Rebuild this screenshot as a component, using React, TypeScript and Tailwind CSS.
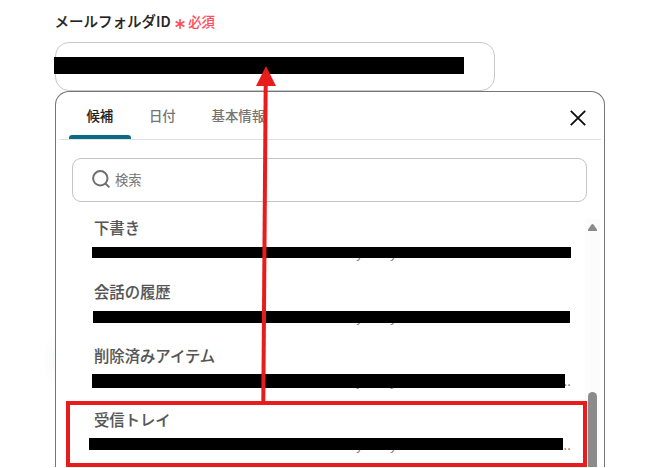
import React, { useState } from 'react'
import clsx from 'clsx'

interface Folder {
  id: string
  name: string
  // 伏せ字バーの位置とサイズ
  maskClass: string
  truncated: boolean
}

const TABS = ['候補', '日付', '基本情報']

const FOLDERS: Folder[] = [
  { id: 'drafts', name: '下書き', maskClass: 'left-[-2px] top-[32px] h-[11px] w-[479px]', truncated: false },
  { id: 'history', name: '会話の履歴', maskClass: 'left-[-1px] top-[32px] h-[12px] w-[477px]', truncated: false },
  { id: 'deleted', name: '削除済みアイテム', maskClass: 'left-[-2px] top-[31px] h-[14px] w-[473px]', truncated: true },
  { id: 'inbox', name: '受信トレイ', maskClass: 'left-[-5px] top-[31px] h-[12px] w-[474px]', truncated: true }
]

const SearchIcon = () => (
  <svg width="20" height="20" viewBox="0 0 20 20" fill="none" stroke="#6f6f6f" strokeWidth="2">
    <circle cx="9.3" cy="8.3" r="7.2" />
    <path d="M14.1 13.2L18.4 17.4" />
  </svg>
)

const CloseIcon = () => (
  <svg width="16" height="16" viewBox="0 0 16 16" fill="none" stroke="#111" strokeWidth="1.9">
    <path d="M0.8 0.8L15.2 15.2M15.2 0.8L0.8 15.2" />
  </svg>
)

const RequiredIcon = () => (
  <svg width="10" height="12" viewBox="0 0 10 12" fill="none" stroke="#ff4d5e" strokeWidth="1.6">
    <path d="M5 1V11M0.6 3.5L9.4 8.5M9.4 3.5L0.6 8.5" />
  </svg>
)

/**
 * 候補リストの1行
 */
const FolderRow: React.FC<{ folder: Folder }> = ({ folder }) => (
  <li className="relative h-[64px]">
    <div className="h-[24px] text-[15.35px] leading-[24px] font-medium text-[#555] [-webkit-text-stroke:0.12px_#555]">
      {folder.name}
    </div>
    <div className="mt-[5px] flex h-[18px] text-[13px] leading-[18px] text-[#777]">
      <span className="ml-[262px] w-[34px]">y</span>
      <span className="w-[170px]">y</span>
      {folder.truncated && <span>...</span>}
    </div>
    <div className={clsx('absolute bg-black', folder.maskClass)} />
  </li>
)

/**
 * 候補パネル - タブ、検索欄、フォルダ一覧
 */
const SuggestionPanel: React.FC = () => {
  const [activeTab, setActiveTab] = useState(TABS[0])

  return (
    <div className="flex h-[376px] w-[550px] flex-col rounded-t-[14px] border border-b-0 border-[#757575] bg-white">
      <div className="mx-[3px] flex h-[48px] border-b border-[#e2e2e2] pl-[10px]">
        {TABS.map(tab => (
          <button
            key={tab}
            onClick={() => setActiveTab(tab)}
            className={clsx(
              'relative mr-px h-[47px] shrink-0 px-[17.4px] text-[13.4px] font-medium',
              tab === activeTab ? 'text-[#222] [-webkit-text-stroke:0.1px_#222]' : 'text-[#757575]'
            )}
          >
            {tab}
            {tab === activeTab && (
              <span className="absolute bottom-0 left-0 h-[4px] w-full rounded-t-[3px] bg-[#0b6b85]" />
            )}
          </button>
        ))}
        <button className="mr-[15px] ml-auto pt-[5px]" aria-label="閉じる">
          <CloseIcon />
        </button>
      </div>

      <div className="mx-[16px] mt-[18px] flex h-[44px] w-[515px] shrink-0 items-center rounded-[9px] border border-[#c4c4c4] pl-[18px]">
        <SearchIcon />
        <span className="ml-[4px] text-[13.3px] text-[#757575]">検索</span>
      </div>

      <div className="mt-[13px] flex min-h-0 grow">
        <ul className="w-[529px] pl-[38px]">
          {FOLDERS.map(folder => (
            <FolderRow key={folder.id} folder={folder} />
          ))}
        </ul>
        <div className="mt-[4px] flex w-[15px] flex-col items-center bg-[#fcfcfc]">
          <svg className="mt-[5px]" width="9" height="7" viewBox="0 0 9 7">
            <path d="M0 7V5.6L3.5 0.6Q4.5 -0.4 5.5 0.6L9 5.6V7Z" fill="#8b8b8b" />
          </svg>
          <div className="mt-auto h-[75px] w-[9px] rounded-t-full bg-[#8b8b8b]" />
        </div>
      </div>
    </div>
  )
}

export default function App() {
  return (
    <div
      lang="ja"
      className="relative h-[468px] w-[648px] overflow-hidden bg-white pl-[55px] font-['Noto_Sans_CJK_JP',sans-serif]"
    >
      {/* パネル左側の薄い影 */}
      <div className="absolute top-[330px] left-[43px] h-[60px] w-[12px] bg-[radial-gradient(ellipse_at_right,#f7f8f8,#ffffff_70%)]" />

      <div className="flex h-[42px] items-center">
        <span className="-ml-[0.5px] text-[14.5px] font-medium text-[#222] [-webkit-text-stroke:0.15px_#222]">
          メールフォルダID
        </span>
        <span className="ml-[4px] flex items-center gap-[3.5px] text-[13.4px] font-medium text-[#ff4d5e] [-webkit-text-stroke:0.1px_#ff4d5e]">
          <span className="mt-[6px]">
            <RequiredIcon />
          </span>
          必須
        </span>
      </div>

      <div className="relative h-[49px] w-[440px] rounded-[14px] border border-[#c8c8c8]">
        <div className="absolute top-[14px] left-[-2px] h-[17px] w-[410px] bg-black" />
      </div>

      <SuggestionPanel />

      {/* 受信トレイの強調枠と矢印 */}
      <div className="absolute top-[401px] left-[66px] h-[66px] w-[521px] border-4 border-[#e81c1c]" />
      <svg className="absolute top-[60px] left-[250px]" width="32" height="345" viewBox="0 0 32 345">
        <path d="M13.3 343L15.7 24" stroke="#e81c1c" strokeWidth="4" />
        <path d="M16 6L26 26H6Z" fill="#e81c1c" />
      </svg>
    </div>
  )
}
